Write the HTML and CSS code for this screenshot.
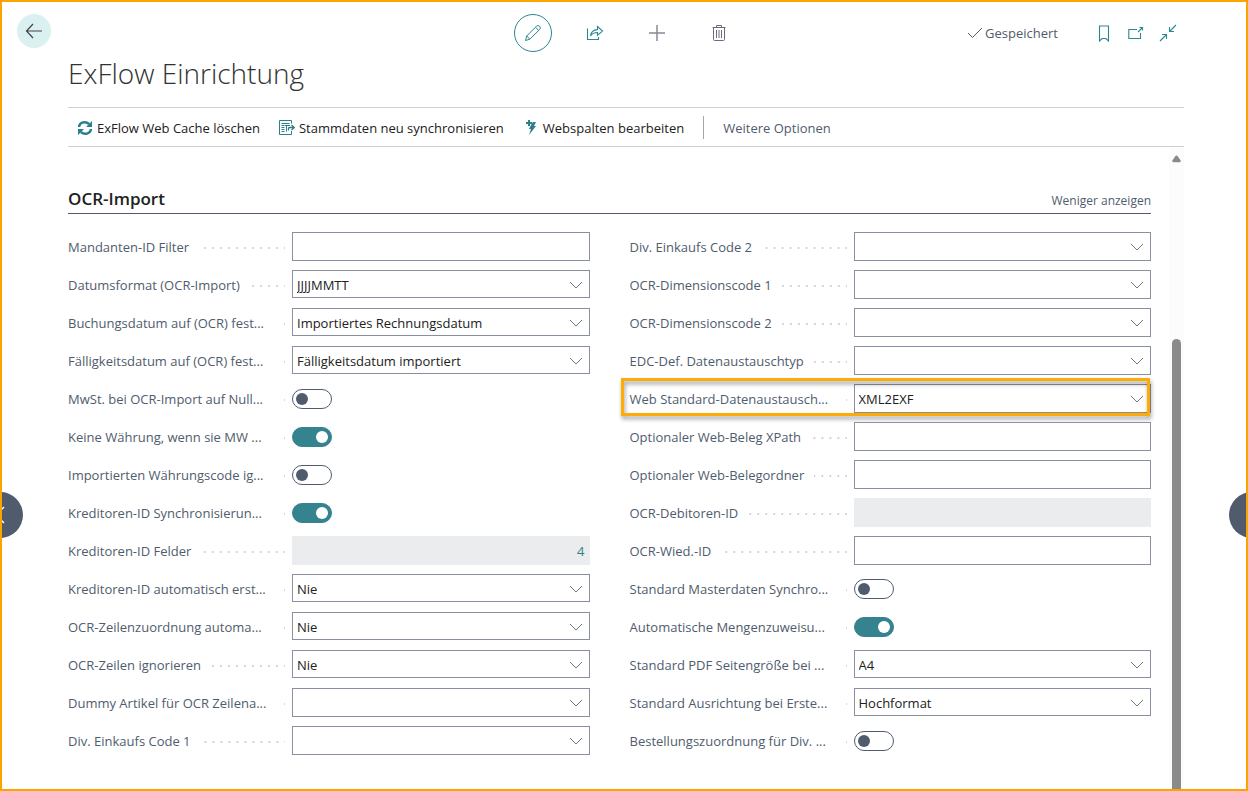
FILE: index.html
```html
<!DOCTYPE html>
<html lang="de">
<head>
<meta charset="utf-8">
<meta name="viewport" content="width=device-width, initial-scale=1">
<title>ExFlow Einrichtung</title>
<link rel="stylesheet" href="styles.css">
</head>
<body>
<svg class="defs" aria-hidden="true">
  <symbol id="chevron" viewBox="0 0 14 8"><path d="M1 1l6 6 6-6" fill="none" stroke="currentColor"/></symbol>
</svg>
<div class="frame">
  <div class="gutter">
    <button class="back" type="button" aria-label="Zurück">
      <svg width="18" height="16" viewBox="0 0 18 16" fill="none" stroke="currentColor" stroke-width="1.200"><path d="M8 1L1.500 8L8 15M1.500 8H17"/></svg>
    </button>
  </div>
  <main class="page">
    <header class="topbar">
      <div class="tools">
        <button class="tool tool--edit" type="button" aria-label="Bearbeiten">
          <svg width="18" height="18" viewBox="0 0 18 18" fill="none" stroke="currentColor"><path d="M1.500 16.500L2.700 12L12.500 2.200Q14 .8 15.600 2.300Q17.100 3.900 15.700 5.400L5.900 15.200ZM2.700 12L5.900 15.200M11.500 3.300L14.700 6.500"/></svg>
        </button>
        <button class="tool tool--teal" type="button" aria-label="Teilen">
          <svg width="18" height="16" viewBox="0 0 18 16" fill="none" stroke="currentColor" stroke-width="1.100"><path d="M1.500 3.500V14.500H12.500V12M4.500 11C5 6.500 7.500 4.800 11.500 4.600V1.500L16.500 6L11.500 10.300V7.500C8 7.500 6 8.600 4.500 11Z"/></svg>
        </button>
        <button class="tool" type="button" aria-label="Neu">
          <svg width="16" height="16" viewBox="0 0 16 16" fill="none" stroke="#878b94" stroke-width="1.500"><path d="M8 0V16M0 8H16"/></svg>
        </button>
        <button class="tool" type="button" aria-label="Löschen">
          <svg width="14" height="16" viewBox="0 0 14 16" fill="none" stroke="#686e7b"><path d="M.5 2.500H13.500M4.500 2.500V.5H9.500V2.500M1.500 2.500V14.500Q1.500 15.500 2.500 15.500H11.500Q12.500 15.500 12.500 14.500V2.500M4.500 5V13M7 5V13M9.500 5V13"/></svg>
        </button>
      </div>
      <div class="status">
        <span class="saved"><svg width="16" height="12" viewBox="0 0 16 12" fill="none" stroke="currentColor"><path d="M1 6L5.500 10.500L15 1"/></svg>Gespeichert</span>
        <button class="mini" type="button" aria-label="Lesezeichen">
          <svg width="12" height="17" viewBox="0 0 12 17" fill="none" stroke="currentColor" stroke-width="1.100"><path d="M1.500 1H10.500V16L7.800 13.500H4.200L1.500 16Z"/></svg>
        </button>
        <button class="mini" type="button" aria-label="In neuem Fenster öffnen">
          <svg width="16" height="14" viewBox="0 0 16 14" fill="none" stroke="currentColor" stroke-width="1.100"><path d="M9 3.500H.8V12.500H12.500V7M10 6L14.500 1.500M11.500 1.500H14.500V4.500"/></svg>
        </button>
        <button class="mini" type="button" aria-label="Verkleinern">
          <svg width="18" height="18" viewBox="0 0 18 18" fill="none" stroke="currentColor" stroke-width="1.100"><path d="M17 1L10.500 7.500M10.500 3V7.500H15M1 17L7.500 10.500M3 10.500H7.500V15"/></svg>
        </button>
      </div>
    </header>
    <h1 class="title">ExFlow Einrichtung</h1>
    <nav class="actions">
      <button class="action" type="button">
        <svg width="16" height="16" viewBox="0 0 16 16" fill="none" stroke="currentColor" stroke-width="2.400"><path d="M2 7C2.500 2 8.500 .8 12.200 4M14 9C13.500 14 7.500 15.200 3.800 12"/><path d="M15 1V7H9ZM1 15V9H7Z" fill="currentColor" stroke="none"/></svg>
        ExFlow Web Cache löschen
      </button>
      <button class="action" type="button">
        <svg width="16" height="16" viewBox="0 0 16 16" fill="none" stroke="currentColor"><path d="M12.500 3.500V.5H.5V14.500H12.500V11M2.500 3.500H10.500M2.500 5.500H5.500M2.500 7.500H5.500M2.500 9.500H5.500M2.500 11.500H5.500M6 5.500H11M7.500 5.500V11.500"/><path d="M9.500 10.500V8.500Q9.500 7.500 10.500 7.500H14.500M12.500 5L15.200 7.500L12.500 10" stroke-width="1.300"/></svg>
        Stammdaten neu synchronisieren
      </button>
      <button class="action" type="button">
        <svg width="16" height="16" viewBox="0 0 16 16" fill="currentColor"><path d="M5 0H7V2H9V4H7V6H5V4H3V2H5ZM10 2H13L11 6H13L6 15L8 9H6L8 5Z"/></svg>
        Webspalten bearbeiten
      </button>
      <span class="divider"></span>
      <button class="action action--more" type="button">Weitere Optionen</button>
    </nav>
    <div class="scroll">
      <section class="section">
        <div class="section__head">
          <h2 class="section__title">OCR-Import</h2>
          <a class="section__less" href="#">Weniger anzeigen</a>
        </div>
        <div class="columns">
          <div class="column">
            <div class="row"><div class="cap"><label for="l1">Mandanten-ID Filter</label></div><div class="field"><input class="box" id="l1" type="text"></div></div>
            <div class="row"><div class="cap"><label for="l2">Datumsformat (OCR-Import)</label></div><div class="field"><select class="box box--select" id="l2"><option>JJJJMMTT</option></select><svg class="chev"><use href="#chevron"/></svg></div></div>
            <div class="row"><div class="cap cap--cut"><label for="l3">Buchungsdatum auf (OCR) fest...</label></div><div class="field"><select class="box box--select" id="l3"><option>Importiertes Rechnungsdatum</option></select><svg class="chev"><use href="#chevron"/></svg></div></div>
            <div class="row"><div class="cap cap--cut"><label for="l4">Fälligkeitsdatum auf (OCR) fest...</label></div><div class="field"><select class="box box--select" id="l4"><option>Fälligkeitsdatum importiert</option></select><svg class="chev"><use href="#chevron"/></svg></div></div>
            <div class="row"><div class="cap cap--cut"><label for="l5">MwSt. bei OCR-Import auf Null...</label></div><input class="switch" id="l5" type="checkbox"></div>
            <div class="row"><div class="cap cap--cut"><label for="l6">Keine Währung, wenn sie MW ...</label></div><input class="switch" id="l6" type="checkbox" checked></div>
            <div class="row"><div class="cap cap--cut"><label for="l7">Importierten Währungscode ig...</label></div><input class="switch" id="l7" type="checkbox"></div>
            <div class="row"><div class="cap cap--cut"><label for="l8">Kreditoren-ID Synchronisierun...</label></div><input class="switch" id="l8" type="checkbox" checked></div>
            <div class="row"><div class="cap"><label for="l9">Kreditoren-ID Felder</label></div><div class="field"><input class="box box--off box--number" id="l9" type="text" value="4" readonly></div></div>
            <div class="row"><div class="cap cap--cut"><label for="l10">Kreditoren-ID automatisch erst...</label></div><div class="field"><select class="box box--select" id="l10"><option>Nie</option></select><svg class="chev"><use href="#chevron"/></svg></div></div>
            <div class="row"><div class="cap cap--cut"><label for="l11">OCR-Zeilenzuordnung automa...</label></div><div class="field"><select class="box box--select" id="l11"><option>Nie</option></select><svg class="chev"><use href="#chevron"/></svg></div></div>
            <div class="row"><div class="cap"><label for="l12">OCR-Zeilen ignorieren</label></div><div class="field"><select class="box box--select" id="l12"><option>Nie</option></select><svg class="chev"><use href="#chevron"/></svg></div></div>
            <div class="row"><div class="cap cap--cut"><label for="l13">Dummy Artikel für OCR Zeilena...</label></div><div class="field"><input class="box" id="l13" type="text"><svg class="chev"><use href="#chevron"/></svg></div></div>
            <div class="row"><div class="cap"><label for="l14">Div. Einkaufs Code 1</label></div><div class="field"><input class="box" id="l14" type="text"><svg class="chev"><use href="#chevron"/></svg></div></div>
          </div>
          <div class="column">
            <div class="row"><div class="cap"><label for="r1">Div. Einkaufs Code 2</label></div><div class="field"><input class="box" id="r1" type="text"><svg class="chev"><use href="#chevron"/></svg></div></div>
            <div class="row"><div class="cap"><label for="r2">OCR-Dimensionscode 1</label></div><div class="field"><input class="box" id="r2" type="text"><svg class="chev"><use href="#chevron"/></svg></div></div>
            <div class="row"><div class="cap"><label for="r3">OCR-Dimensionscode 2</label></div><div class="field"><input class="box" id="r3" type="text"><svg class="chev"><use href="#chevron"/></svg></div></div>
            <div class="row"><div class="cap"><label for="r4">EDC-Def. Datenaustauschtyp</label></div><div class="field"><input class="box" id="r4" type="text"><svg class="chev"><use href="#chevron"/></svg></div></div>
            <div class="row row--marked"><div class="cap cap--cut"><label for="r5">Web Standard-Datenaustausch...</label></div><div class="field"><input class="box" id="r5" type="text" value="XML2EXF"><svg class="chev"><use href="#chevron"/></svg></div></div>
            <div class="row"><div class="cap"><label for="r6">Optionaler Web-Beleg XPath</label></div><div class="field"><input class="box" id="r6" type="text"></div></div>
            <div class="row"><div class="cap"><label for="r7">Optionaler Web-Belegordner</label></div><div class="field"><input class="box" id="r7" type="text"></div></div>
            <div class="row"><div class="cap"><label for="r8">OCR-Debitoren-ID</label></div><div class="field"><input class="box box--off" id="r8" type="text" readonly></div></div>
            <div class="row"><div class="cap"><label for="r9">OCR-Wied.-ID</label></div><div class="field"><input class="box" id="r9" type="text"></div></div>
            <div class="row"><div class="cap cap--cut"><label for="r10">Standard Masterdaten Synchro...</label></div><input class="switch" id="r10" type="checkbox"></div>
            <div class="row"><div class="cap cap--cut"><label for="r11">Automatische Mengenzuweisu...</label></div><input class="switch" id="r11" type="checkbox" checked></div>
            <div class="row"><div class="cap cap--cut"><label for="r12">Standard PDF Seitengröße bei ...</label></div><div class="field"><select class="box box--select" id="r12"><option>A4</option></select><svg class="chev"><use href="#chevron"/></svg></div></div>
            <div class="row"><div class="cap cap--cut"><label for="r13">Standard Ausrichtung bei Erste...</label></div><div class="field"><select class="box box--select" id="r13"><option>Hochformat</option></select><svg class="chev"><use href="#chevron"/></svg></div></div>
            <div class="row"><div class="cap cap--cut"><label for="r14">Bestellungszuordnung für Div. ...</label></div><input class="switch" id="r14" type="checkbox"></div>
          </div>
        </div>
      </section>
      <div class="track" aria-hidden="true">
        <svg width="9" height="8" viewBox="0 0 10 8"><path d="M3.800 .8Q5 -.4 6.200 .8L9.600 5.800Q10 7.500 8.500 7.500H1.500Q0 7.500 .4 5.800Z" fill="#8a8a8a"/></svg>
        <div class="thumb"></div>
      </div>
    </div>
  </main>
  <button class="pager pager--prev" type="button" aria-label="Vorheriger Datensatz">
    <svg width="10" height="18" viewBox="0 0 10 18" fill="none" stroke="currentColor" stroke-width="1.500"><path d="M9 1L1 9L9 17"/></svg>
  </button>
  <button class="pager pager--next" type="button" aria-label="Nächster Datensatz"></button>
</div>
</body>
</html>
```

FILE: styles.css
```css
* {
  box-sizing: border-box;
}

body {
  margin: 0;
  background: #fff;
  color: #212121;
  font: 13px/20px "Open Sans", "Noto Sans", sans-serif;
}

button {
  padding: 0;
  border: 0;
  background: none;
  color: inherit;
  font: inherit;
}

svg {
  display: block;
  flex: none;
}

.defs {
  position: absolute;
  width: 0;
  height: 0;
}

.frame {
  position: relative;
  display: grid;
  grid-template-columns: 66px minmax(0, 1fr) 62px;
  min-height: 100vh;
  border: 2px solid #faa500;
  overflow: hidden;
}

.gutter {
  padding: 12px 0 0 15px;
}

.back {
  display: grid;
  place-items: center;
  width: 34px;
  height: 34px;
  border-radius: 50%;
  background: #daf0f1;
  color: #444;
}

.page {
  display: flex;
  flex-direction: column;
  padding-top: 12px;
}

.topbar {
  display: grid;
  grid-template-columns: 1fr auto 1fr;
  align-items: center;
}

.tools {
  grid-column: 2;
  display: flex;
  gap: 24px;
}

.tool {
  display: grid;
  place-items: center;
  width: 38px;
  height: 38px;
}

.tool--teal,
.mini {
  color: #2b8791;
}

.tool--edit {
  border: 1px solid #2b8791;
  border-radius: 50%;
  color: #2b8791;
}

.status {
  display: flex;
  justify-content: flex-end;
  align-items: center;
}

.saved {
  display: flex;
  align-items: center;
  gap: 2px;
  margin-right: 30px;
  color: #505c6d;
}

.mini {
  display: grid;
  place-items: center;
  width: 32px;
  height: 32px;
}

.title {
  margin: 3px 0 16px;
  color: #323232;
  font-size: 28px;
  font-weight: 300;
  line-height: 36px;
}

.actions {
  display: flex;
  align-items: center;
  gap: 19px;
  height: 40px;
  padding: 1px 0 0 9px;
  border-top: 1px solid #d0d0d0;
  border-bottom: 1px solid #d0d0d0;
}

.action {
  display: flex;
  align-items: center;
  gap: 4px;
  white-space: nowrap;
}

.action svg {
  color: #2b7f8b;
}

.action--more {
  color: #505c6d;
}

.divider {
  width: 1px;
  height: 23px;
  background: #a3a6ae;
}

.scroll {
  display: flex;
  flex: 1;
  gap: 18px;
}

.section {
  flex: 1;
  min-width: 0;
  padding: 38px 0 32px;
}

.section__head {
  display: flex;
  justify-content: space-between;
  align-items: baseline;
  margin-bottom: 18px;
  border-bottom: 1px solid #505c6d;
}

.section__title {
  margin: 0;
  font-size: 17px;
  font-weight: 600;
  line-height: 28px;
}

.section__less {
  color: #505c6d;
  font-size: 12px;
  text-decoration: none;
}

.columns {
  display: grid;
  grid-template-columns: 1fr 1fr;
  gap: 40px;
}

.column {
  display: grid;
  gap: 8px;
  align-content: start;
}

.row {
  position: relative;
  display: grid;
  grid-template-columns: 217px minmax(0, 1fr);
  column-gap: 7px;
  height: 30px;
}

.cap {
  display: flex;
  align-items: center;
  gap: 10px;
  color: #505c6d;
  white-space: nowrap;
}

.cap::after {
  content: "";
  flex: 1;
  height: 2px;
  margin-top: 2px;
  background: linear-gradient(to right, #d3d5d9 2px, transparent 2px) right -7px top / 8px 2px repeat-x;
}

.cap--cut label {
  width: 205px;
}

.field {
  position: relative;
}

.box {
  display: block;
  width: 100%;
  height: 29px;
  margin: 0;
  padding: 0 4px;
  border: 1px solid #8b90a0;
  border-radius: 0;
  background: #fff;
  color: #212121;
  font: inherit;
  appearance: none;
}

.box--select {
  height: 28px;
  padding-top: 2px;
}

.box--off {
  border-color: #ebecee;
  background: #ebecee;
}

.box--number {
  color: #2b7f8b;
  text-align: right;
}

.chev {
  position: absolute;
  top: 11px;
  right: 7px;
  width: 14px;
  height: 8px;
  color: #74767f;
  pointer-events: none;
}

.switch {
  display: flex;
  align-items: center;
  align-self: center;
  width: 40px;
  height: 20px;
  margin: 0;
  padding: 0 3px;
  border: 1px solid #505c6d;
  border-radius: 10px;
  background: #fff;
  appearance: none;
}

.switch::before {
  content: "";
  width: 12px;
  height: 12px;
  border-radius: 50%;
  background: #505c6d;
}

.switch:checked {
  justify-content: flex-end;
  border-color: #35838f;
  background: #35838f;
}

.switch:checked::before {
  background: #fff;
}

.row--marked::after {
  content: "";
  position: absolute;
  inset: -6px 1px -2px -9px;
  border: 3px solid #fbac06;
  filter: drop-shadow(1px 3px 2px rgba(0, 0, 0, 0.4));
  pointer-events: none;
}

.track {
  display: flex;
  flex-direction: column;
  align-items: center;
  gap: 176px;
  width: 15px;
  padding-top: 8px;
  background: #fcfcfc;
}

.thumb {
  flex: 1;
  width: 9px;
  border-radius: 5px 5px 0 0;
  background: #8a8a8a;
}

.pager {
  position: absolute;
  top: 490px;
  display: grid;
  place-items: center;
  width: 46px;
  height: 46px;
  border-radius: 50%;
  background: #505c6d;
  color: #fff;
}

.pager--prev {
  left: -25px;
}

.pager--next {
  right: -29px;
}
```
